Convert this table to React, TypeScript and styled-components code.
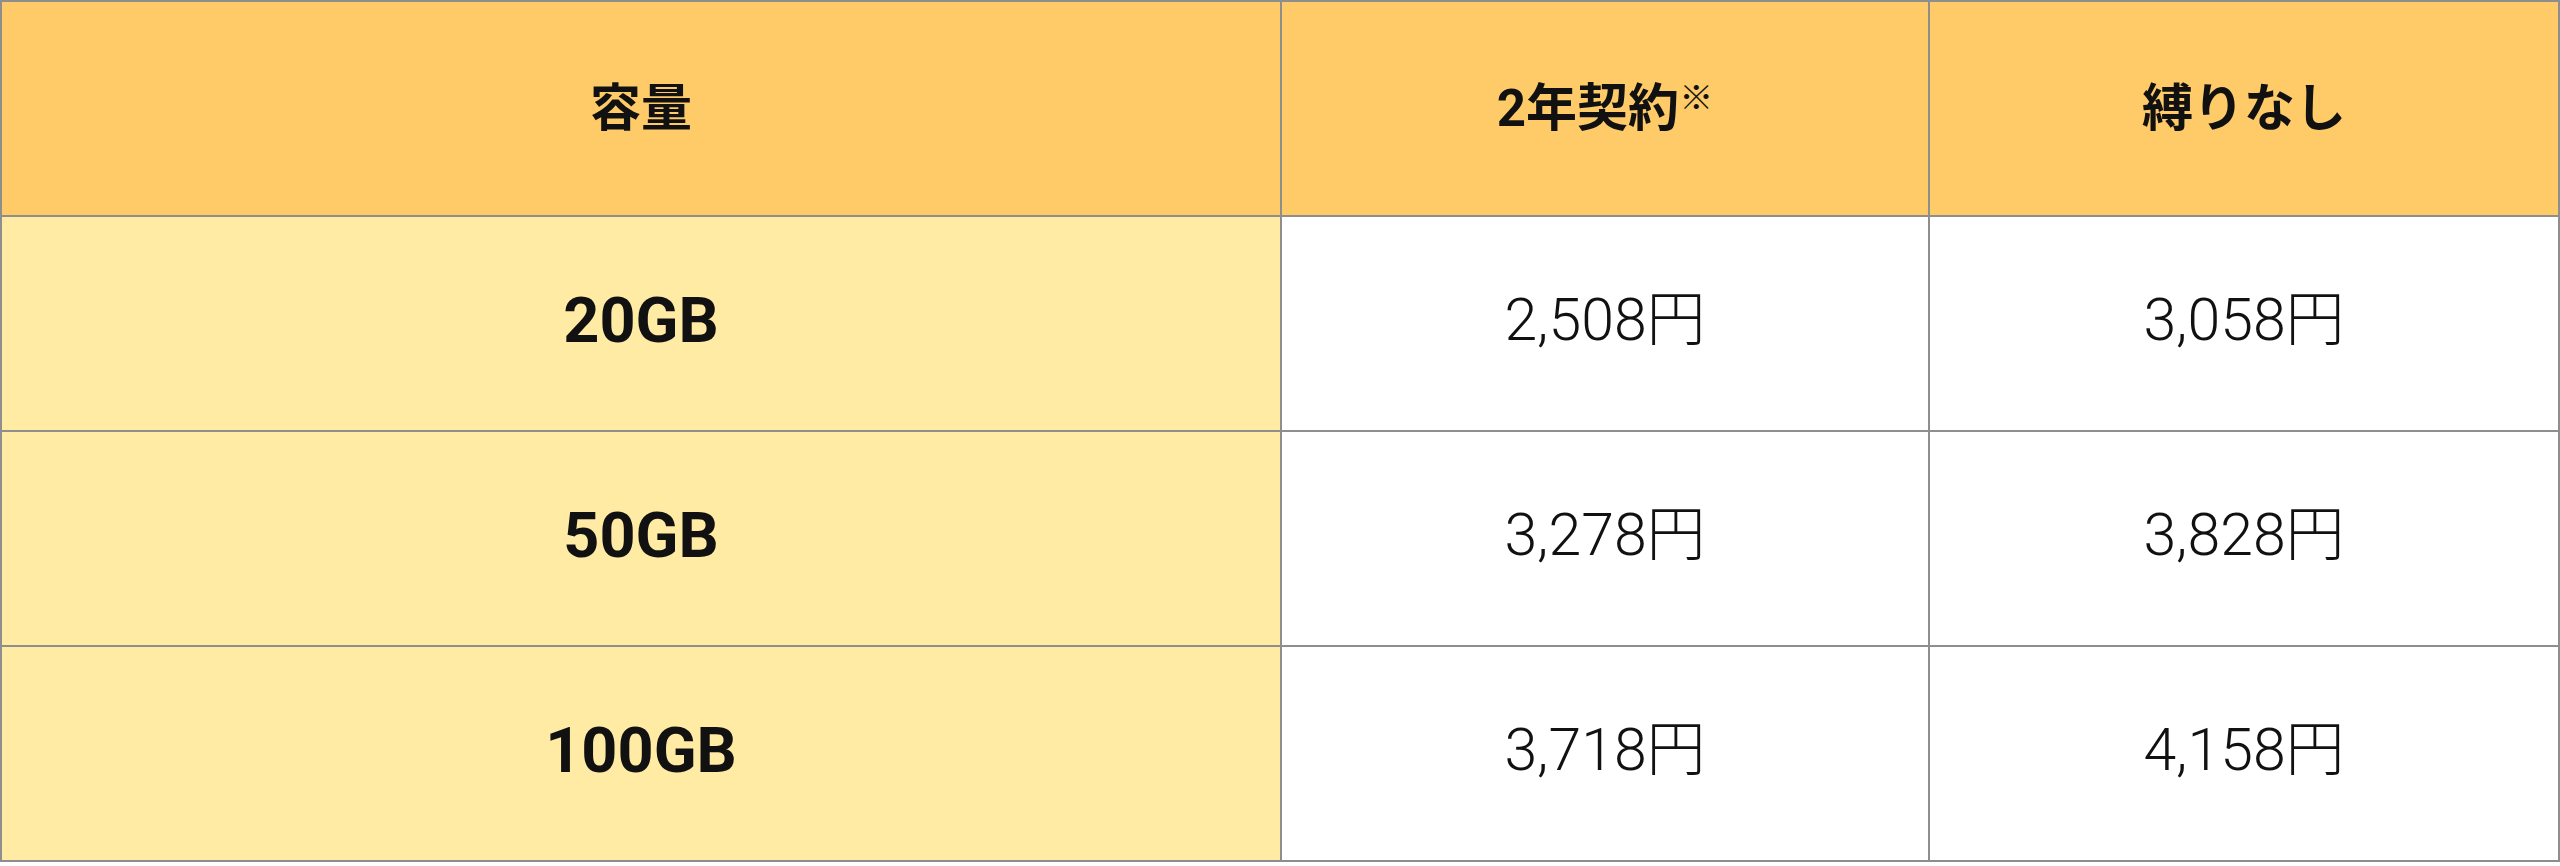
import React from 'react'
import styled, { createGlobalStyle } from 'styled-components'

const GlobalStyle = createGlobalStyle`
  body {
    margin: 0;
    background: #ffffff;
    font-family: Roboto, "Noto Sans CJK JP", sans-serif;
  }
`

const rows = [
  { size: '20GB', twoYear: '2,508円', free: '3,058円' },
  { size: '50GB', twoYear: '3,278円', free: '3,828円' },
  { size: '100GB', twoYear: '3,718円', free: '4,158円' },
]

const App = () => {
  return (
    <>
      <GlobalStyle />
      <Table>
        <colgroup>
          <col style={{ width: 1280 }} />
          <col style={{ width: 648 }} />
          <col style={{ width: 630 }} />
        </colgroup>
        <thead>
          <Row>
            <HeadCell>容量</HeadCell>
            <HeadCell>
              2年契約<Mark>※</Mark>
            </HeadCell>
            <HeadCell>縛りなし</HeadCell>
          </Row>
        </thead>
        <tbody>
          {rows.map((r) => (
            <Row key={r.size}>
              <LabelCell>{r.size}</LabelCell>
              <PriceCell>{r.twoYear}</PriceCell>
              <PriceCell>{r.free}</PriceCell>
            </Row>
          ))}
        </tbody>
      </Table>
    </>
  )
}

export default App

const Table = styled.table`
  width: 2558px;
  border-collapse: collapse;
  table-layout: fixed;
`

const Row = styled.tr`
  height: 215px;
`

const Cell = styled.td`
  border: 2px solid #8e8e8e;
  color: #111;
  text-align: center;
  vertical-align: middle;
  padding: 0 0 6px;
  line-height: 1.2;
`

const HeadCell = styled(Cell).attrs({ as: 'th' })`
  background: #ffcb69;
  font-family: Roboto, "Noto Sans CJK JP", sans-serif;
  font-size: 51px;
  font-weight: 700;
  padding: 0;
`

const Mark = styled.span`
  font-size: 34px;
  font-weight: 400;
  vertical-align: 16px;
`

const LabelCell = styled(Cell)`
  background: #ffeba3;
  font-size: 63px;
  font-weight: 700;
`

const PriceCell = styled(Cell)`
  background: #ffffff;
  font-size: 59px;
  font-weight: 300;
`
